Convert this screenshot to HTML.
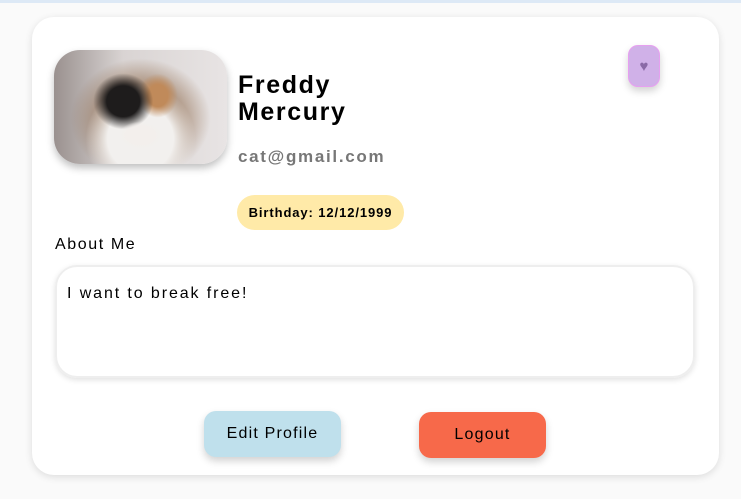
<!DOCTYPE html>
<html><head><style>
html,body{margin:0;padding:0;width:741px;height:499px;overflow:hidden;background:#fafafa;font-family:"Liberation Sans",sans-serif;position:relative}
.top{position:absolute;left:0;top:0;width:741px;height:3px;background:#dde9f6}
.card{position:absolute;left:32px;top:17px;width:687px;height:458px;background:#fff;border-radius:22px;box-shadow:0 2px 8px rgba(0,0,0,.12)}
.img{position:absolute;left:54px;top:50px;width:173px;height:114px;border-radius:26px;overflow:hidden;box-shadow:0 4px 8px rgba(0,0,0,.25);
background:radial-gradient(ellipse 22px 14px at 50% 75%,#f3efec 60%,transparent 100%),
radial-gradient(ellipse 30px 28px at 40% 45%,#1e1c1c 55%,transparent 100%),
radial-gradient(ellipse 20px 22px at 60% 40%,#c08a5a 50%,transparent 100%),
radial-gradient(ellipse 55px 55px at 50% 78%,#f2f0ee 60%,transparent 100%),
radial-gradient(ellipse 70px 60px at 50% 60%,#9a7a60 40%,transparent 100%),
linear-gradient(90deg,#9a918f,#d9d4d3 40%,#e8e4e4)}
.name{position:absolute;left:238px;top:72px;font-size:25px;font-weight:bold;line-height:27px;color:#000;letter-spacing:1.6px}
.email{position:absolute;left:238px;top:147px;font-size:17px;font-weight:bold;color:#777;letter-spacing:1.7px}
.bday{position:absolute;left:237px;top:195px;width:167px;height:35px;border-radius:18px;background:#ffeaa8;font-size:13px;font-weight:bold;line-height:35px;text-align:center;letter-spacing:0.9px}
.heart{position:absolute;left:628px;top:45px;width:32px;height:42px;border-radius:10px;background:#d0b1e8;border:1px solid #e6a0f0;box-sizing:border-box;box-shadow:0 4px 8px rgba(0,0,0,.18);color:#8a6aa6;font-size:15px;text-align:center;line-height:42px}
.about{position:absolute;left:55px;top:236px;font-size:16px;letter-spacing:1.6px}
.box{position:absolute;left:55px;top:265px;width:640px;height:113px;border-radius:22px;border:2px solid #eee;box-sizing:border-box;box-shadow:0 2px 6px rgba(0,0,0,.12);font-size:16px;padding:18px 0 0 10px;letter-spacing:1.9px}
.btn{position:absolute;height:46px;border-radius:12px;font-size:16px;text-align:center;line-height:46px;box-shadow:0 4px 8px rgba(0,0,0,.18);letter-spacing:1.2px}
</style></head><body>
<div class="top"></div>
<div class="card"></div>
<div class="img"></div>
<div class="name">Freddy<br>Mercury</div>
<div class="email">cat@gmail.com</div>
<div class="bday">Birthday: 12/12/1999</div>
<div class="heart">♥</div>
<div class="about">About Me</div>
<div class="box">I want to break free!</div>
<div class="btn" style="left:204px;top:411px;width:137px;background:#bfe0ec">Edit Profile</div>
<div class="btn" style="left:419px;top:412px;width:127px;background:#f7694a">Logout</div>
</body></html>
